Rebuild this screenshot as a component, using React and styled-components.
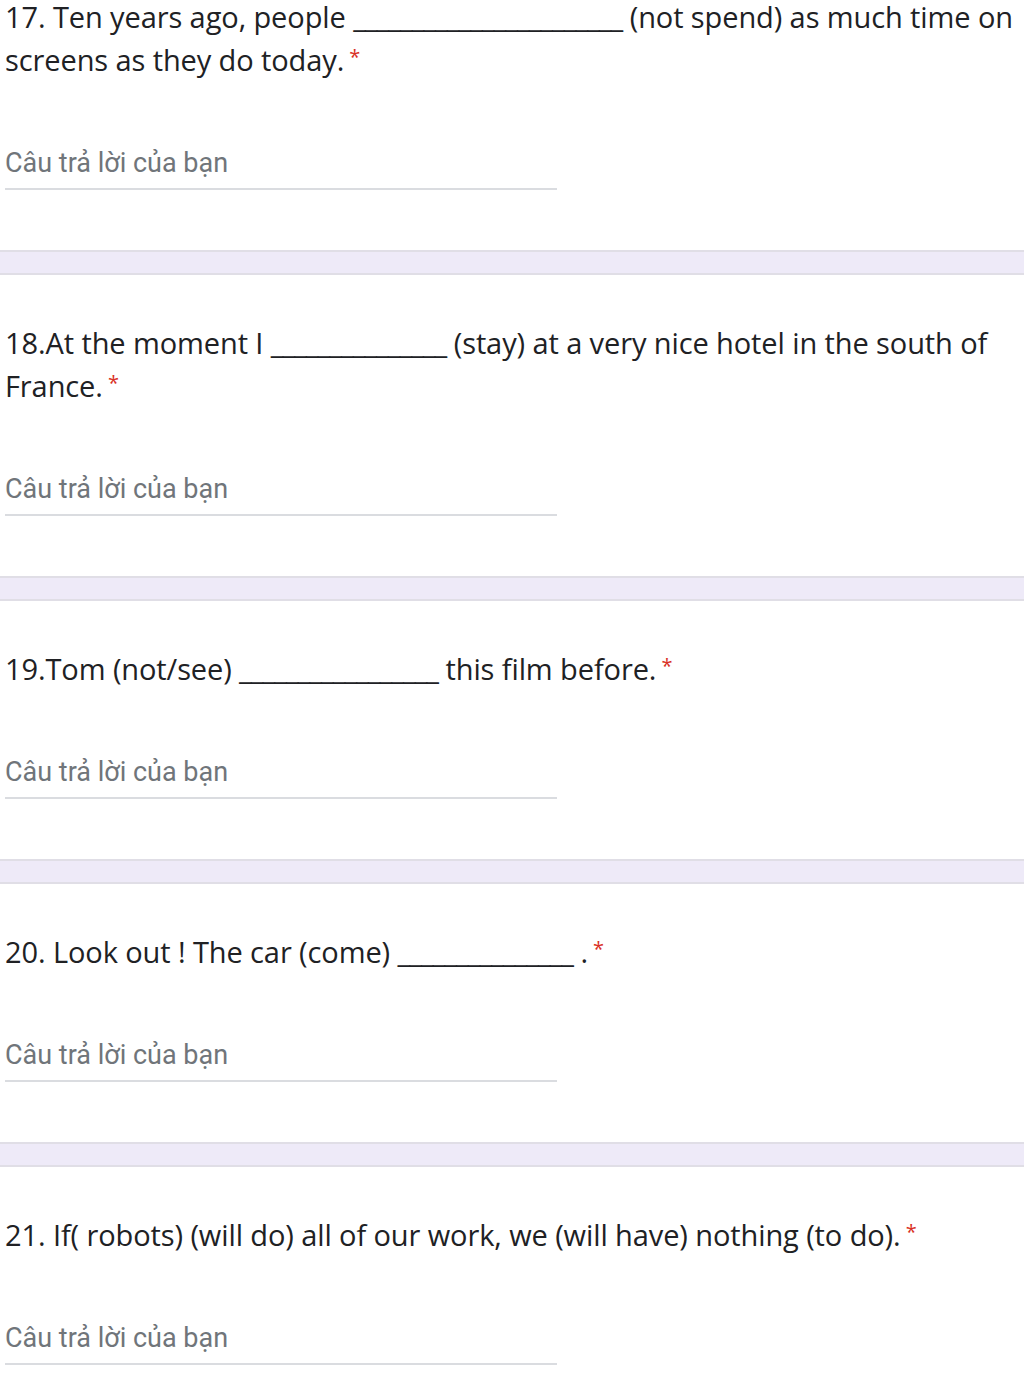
import React from 'react';
import styled, { createGlobalStyle } from 'styled-components';

const GlobalStyle = createGlobalStyle`
  html, body {
    margin: 0;
    padding: 0;
    background: #ffffff;
  }
  body {
    font-family: 'Open Sans', 'Noto Sans', sans-serif;
    overflow: hidden;
  }
`;

// blank = number of underscores in the gap
const questions = [
  {
    id: 17,
    parts: ['17. Ten years ago, people ', { blank: 23 }, ' (not spend) as much time on screens as they do today.'],
  },
  {
    id: 18,
    parts: ['18.At the moment I ', { blank: 15 }, ' (stay) at a very nice hotel in the south of France.'],
  },
  {
    id: 19,
    parts: ['19.Tom (not/see) ', { blank: 17 }, ' this film before.'],
  },
  {
    id: 20,
    parts: ['20. Look out ! The car (come) ', { blank: 15 }, ' .'],
  },
  {
    id: 21,
    parts: ['21. If( robots) (will do) all of our work, we (will have) nothing (to do).'],
  },
];

const FormQuestions = () => {
  return (
    <Page>
      {questions.map((q, i) => (
        <React.Fragment key={q.id}>
          {i > 0 && <Divider />}
          <Card $first={i === 0}>
            <Title>
              {q.parts.map((p, j) =>
                typeof p === 'string' ? (
                  <React.Fragment key={j}>{p}</React.Fragment>
                ) : (
                  <Blank key={j}>{'_'.repeat(p.blank)}</Blank>
                )
              )}
              <Required> *</Required>
            </Title>
            <AnswerInput type="text" placeholder="Câu trả lời của bạn" />
          </Card>
        </React.Fragment>
      ))}
    </Page>
  );
};

const Page = styled.main`
  width: 1024px;
  margin-top: -5px;
`;
const Card = styled.section`
  padding: ${({ $first }) => ($first ? '0' : '46px')} 0 60px 5px;
  background: #ffffff;
`;
const Title = styled.div`
  font-size: 29px;
  line-height: 43px;
  letter-spacing: -0.1px;
  color: #202124;
  margin-bottom: 65px;
`;
const Blank = styled.span`
  white-space: nowrap;
  letter-spacing: -1px;
`;
const Required = styled.span`
  color: #d93025;
  font-size: 20px;
  line-height: 0;
  vertical-align: 7px;
  white-space: pre;
`;
const AnswerInput = styled.input`
  display: block;
  width: 552px;
  box-sizing: border-box;
  margin: 0;
  padding: 0 0 8px 0;
  border: none;
  border-bottom: 2px solid #dadce0;
  outline: none;
  background: transparent;
  font-family: Roboto, 'Liberation Sans', sans-serif;
  font-size: 27px;
  line-height: 34px;
  height: 44px;
  color: #202124;

  &::placeholder {
    color: #70757a;
    opacity: 1;
  }
`;
const Divider = styled.div`
  height: 21px;
  background: #eeeaf8;
  border-top: 2px solid #e0dee6;
  border-bottom: 2px solid #e0dee6;
`;

export default function App() {
  return (
    <>
      <GlobalStyle />
      <FormQuestions />
    </>
  );
}
